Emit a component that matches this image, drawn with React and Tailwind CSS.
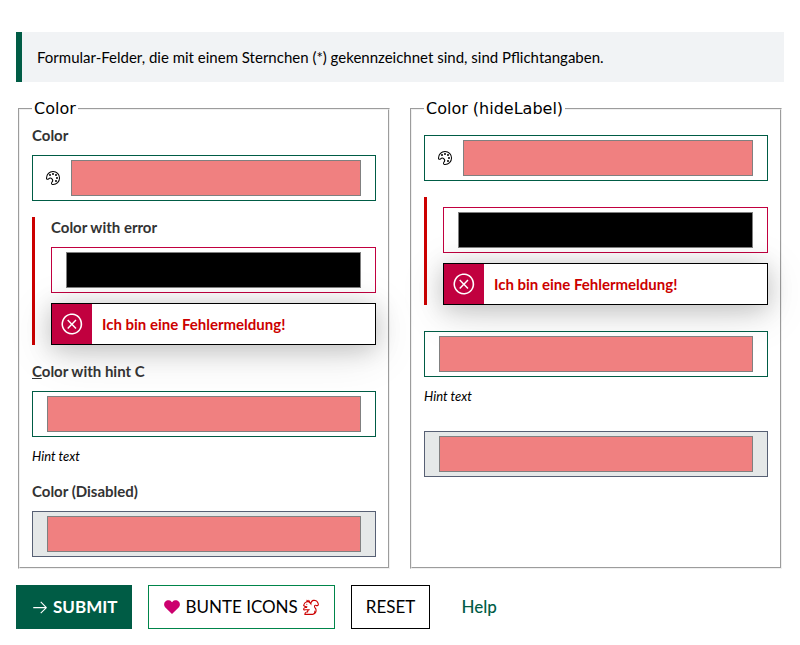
import { VscArrowRight, VscError, VscHeartFilled, VscSquirrel, VscSymbolColor } from "react-icons/vsc";

const TONES = {
  normal: "border-[#005c45]",
  error: "border-[#c1003f]",
  disabled: "border-[#576074] bg-[#e5e8e8]",
};

function LabelText({ text, underlineFirst }) {
  if (!underlineFirst) return text;
  return (
    <>
      <u>{text.slice(0, 1)}</u>
      {text.slice(1)}
    </>
  );
}

function ColorField({ id, label, underlineFirst, hideLabel, icon, value = "#f08080", tone = "normal", error, hint }) {
  return (
    <div className={`flex flex-col gap-2.5 ${error ? "border-l-3 border-[#cc0000] pl-4" : ""}`}>
      {!hideLabel && (
        <label htmlFor={id} className="w-fit text-[15px]/5 font-bold text-[#333333]">
          <LabelText text={label} underlineFirst={underlineFirst} />
        </label>
      )}
      <div className={`flex items-center gap-2 border px-3 ${hideLabel ? "mt-2.5" : ""} ${TONES[tone]}`}>
        {icon}
        <input
          id={id}
          type="color"
          defaultValue={value}
          disabled={tone === "disabled"}
          aria-label={hideLabel ? label : undefined}
          aria-describedby={error ? `${id}-error` : hint ? `${id}-hint` : undefined}
          className="h-11 min-w-0 flex-1 appearance-none bg-transparent [&::-webkit-color-swatch-wrapper]:px-0.5 [&::-webkit-color-swatch-wrapper]:py-1 [&::-webkit-color-swatch]:rounded-none [&::-webkit-color-swatch]:border [&::-webkit-color-swatch]:border-[#808080]"
        />
      </div>
      {error && (
        <div
          id={`${id}-error`}
          role="alert"
          className="flex border border-black bg-white shadow-[0_4px_24px_rgba(0,0,0,0.2),0_8px_48px_rgba(0,0,0,0.12)]"
        >
          <span className="flex size-10 items-center justify-center bg-[#c1003f] text-white">
            <VscError size={24} />
          </span>
          <span className="px-2.5 text-[15px]/10 font-bold text-[#cc0000]">{error}</span>
        </div>
      )}
      {hint && (
        <span id={`${id}-hint`} className="text-[13px]/[18px] italic">
          {hint}
        </span>
      )}
    </div>
  );
}

function Fields({ prefix, hideLabel }) {
  return (
    <div className="flex flex-col gap-4">
      <ColorField id={`${prefix}-color`} label="Color" hideLabel={hideLabel} icon={<VscSymbolColor size={16} />} />
      <ColorField
        id={`${prefix}-error`}
        label="Color with error"
        hideLabel={hideLabel}
        value="#000000"
        tone="error"
        error="Ich bin eine Fehlermeldung!"
      />
      <ColorField
        id={`${prefix}-hint`}
        label="Color with hint C"
        underlineFirst
        hideLabel={hideLabel}
        hint="Hint text"
      />
      <ColorField id={`${prefix}-disabled`} label="Color (Disabled)" hideLabel={hideLabel} tone="disabled" />
    </div>
  );
}

function Group({ legend, children }) {
  return (
    <fieldset className="mx-0.5 mt-0.5 min-w-0 border-2 border-[#f0f0f0] px-3 pt-[7px] pb-2.5 [border-style:groove]">
      <legend className="px-0.5 font-['DejaVu_Sans',sans-serif] text-base/[18px]">{legend}</legend>
      {children}
    </fieldset>
  );
}

export default function App() {
  return (
    <form
      className="flex flex-col gap-4 bg-white px-4 pt-8 pb-4 font-['Lato',sans-serif] text-black"
      onSubmit={(event) => event.preventDefault()}
    >
      <p className="border-l-6 border-[#005c45] bg-[#f1f3f5] py-[15px] pl-[15px] text-[15px]/5">
        Formular-Felder, die mit einem Sternchen (*) gekennzeichnet sind, sind Pflichtangaben.
      </p>
      <div className="grid grid-cols-2 gap-4">
        <Group legend="Color">
          <Fields prefix="shown" />
        </Group>
        <Group legend="Color (hideLabel)">
          <Fields prefix="hidden" hideLabel />
        </Group>
      </div>
      <div className="flex flex-wrap gap-4 text-[17px]/[22px]">
        <button type="submit" className="flex h-11 items-center gap-1 border border-[#005c45] bg-[#005c45] px-3.5 font-bold text-white">
          <VscArrowRight size={18} />
          SUBMIT
        </button>
        <button type="button" className="flex h-11 items-center gap-1 border border-[#00854a] px-3.5">
          <VscHeartFilled size={18} className="text-[#cc006e]" />
          BUNTE ICONS
          <VscSquirrel size={18} className="text-[#cc0000]" />
        </button>
        <button type="reset" className="h-11 border border-black px-3.5">
          RESET
        </button>
        <button type="button" className="h-11 px-[15px] font-medium text-[#005c45]">
          Help
        </button>
      </div>
    </form>
  );
}
